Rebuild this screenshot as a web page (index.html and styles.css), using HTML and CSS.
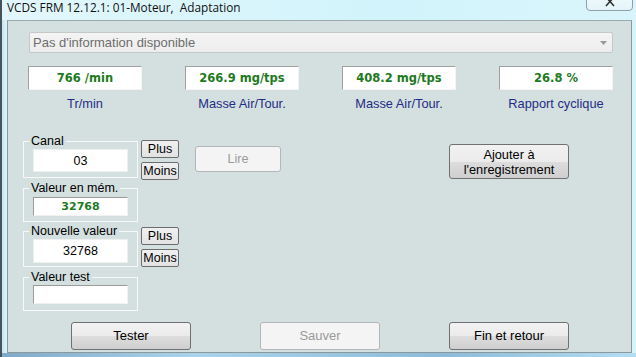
FILE: index.html
```html
<!DOCTYPE html>
<html lang="fr">
<head>
<meta charset="utf-8">
<title>VCDS Adaptation</title>
<link rel="stylesheet" href="styles.css">
</head>
<body>
<div class="window">
  <div class="titlebar">
    <span class="title">VCDS FRM 12.12.1: 01-Moteur,&nbsp; Adaptation</span>
    <div class="close"><svg width="12" height="8" viewBox="0 0 12 8"><path d="M2 -3 L6 1.5 L10 -3 M2 6 L6 1.5 L10 6" fill="none" stroke="#333" stroke-width="1.6"/></svg></div>
  </div>
  <div class="client">
    <div class="combo">
      <span>Pas d'information disponible</span>
      <svg class="arrow" width="7" height="4" viewBox="0 0 7 4"><path d="M0 0 H7 L3.5 4 Z" fill="#9a9a9a"/></svg>
    </div>

    <div class="values">
      <div class="vbox">766 /min</div>
      <div class="vbox">266.9 mg/tps</div>
      <div class="vbox">408.2 mg/tps</div>
      <div class="vbox">26.8 %</div>
      <div class="vlabel">Tr/min</div>
      <div class="vlabel">Masse Air/Tour.</div>
      <div class="vlabel">Masse Air/Tour.</div>
      <div class="vlabel">Rapport cyclique</div>
    </div>

    <div class="lower">
      <div class="leftcol">
        <fieldset class="group g1">
          <legend>Canal</legend>
          <div class="field plain h23">03</div>
        </fieldset>
        <div class="pair p1">
          <button class="btn small">Plus</button>
          <button class="btn small">Moins</button>
        </div>
        <fieldset class="group g2">
          <legend>Valeur en mém.</legend>
          <div class="field sunken h19 green">32768</div>
        </fieldset>
        <fieldset class="group g3">
          <legend>Nouvelle valeur</legend>
          <div class="field plain h24">32768</div>
        </fieldset>
        <div class="pair p2">
          <button class="btn small">Plus</button>
          <button class="btn small">Moins</button>
        </div>
        <fieldset class="group g4">
          <legend>Valeur test</legend>
          <div class="field sunken h19"></div>
        </fieldset>
      </div>
      <button class="btn disabled lire">Lire</button>
      <button class="btn ajouter">Ajouter à<br>l'enregistrement</button>
    </div>

    <div class="bottom">
      <button class="btn big">Tester</button>
      <button class="btn big disabled">Sauver</button>
      <button class="btn big">Fin et retour</button>
    </div>
  </div>
  <div class="bottomframe"></div>
</div>
</body>
</html>
```
FILE: styles.css
```css
* { box-sizing: border-box; }
html, body { margin: 0; padding: 0; }
body {
  width: 636px;
  height: 357px;
  overflow: hidden;
  font-family: "Liberation Sans", Arial, sans-serif;
  background: #d9f3fa;
}
.window {
  width: 636px;
  height: 357px;
  border-left: 2px solid #46525c;
  background: linear-gradient(to right, #c9e6f0 0, #e1f6fb 6px, #d8f4fb 100%);
  display: flex;
  flex-direction: column;
}
.titlebar {
  position: relative;
  height: 20px;
  padding-left: 5px;
  background: linear-gradient(to right, #e2f7fb, #d2f3fb 60%, #d9f5fb);
}
.title {
  font-family: "Open Sans", "Noto Sans", sans-serif;
  font-size: 11.8px;
  line-height: 14px;
  color: #111;
  display: block;
  padding-top: 0;
}
.close {
  position: absolute;
  left: 584px;
  top: -3px;
  width: 47px;
  height: 14px;
  border: 1px solid #8da0a6;
  border-radius: 0 0 4px 4px;
  background: linear-gradient(#eef9fc, #e3f4f8);
  display: flex;
  justify-content: center;
  align-items: flex-start;
  padding-top: 2px;
}
.client {
  margin-left: 5px;
  width: 625px;
  height: 333px;
  background: #d4dfdf;
  border: 1px solid #8a9a9c;
  border-top-color: #9aacae;
  display: flex;
  flex-direction: column;
  padding-top: 11px;
}
.combo {
  margin-left: 21px;
  width: 584px;
  height: 21px;
  border: 1px solid #c3c9c9;
  border-radius: 2px;
  background: linear-gradient(#f4f4f4, #ededed);
  display: flex;
  align-items: center;
  justify-content: space-between;
  padding: 0 5px 0 3px;
  font-size: 13px;
  color: #6d6d6d;
}
.combo .arrow { margin-top: 1px; }
.values {
  margin-top: 13px;
  margin-left: 20px;
  display: grid;
  grid-template-columns: repeat(4, 114px);
  column-gap: 43px;
}
.vbox {
  height: 24px;
  background: #fff;
  border-top: 1px solid #a0a0a0;
  border-left: 1px solid #a0a0a0;
  border-right: 1px solid #f4f4f4;
  border-bottom: 1px solid #f4f4f4;
  font-family: "DejaVu Sans", Verdana, sans-serif;
  font-weight: bold;
  font-size: 11.5px;
  color: #1d7a1d;
  display: flex;
  align-items: center;
  justify-content: center;
}
.vlabel {
  margin-top: 7px;
  text-align: center;
  font-size: 12.8px;
  line-height: 14px;
  color: #1f2d85;
}
.lower {
  margin-top: 23px;
  margin-left: 15px;
  display: flex;
  align-items: flex-start;
}
.leftcol {
  display: grid;
  grid-template-columns: 115px 38px;
  column-gap: 3px;
  align-items: start;
}
.group {
  grid-column: 1;
  width: 115px;
  min-width: 0;
  margin: 0;
  border: 1px solid #f6f9f9;
  padding: 1px 0 5px 9px;
}
.group legend {
  font-size: 12.5px;
  line-height: 14px;
  padding: 0 2px;
  margin-left: -4px;
  color: #000;
}
.g1 { grid-row: 1; padding-bottom: 5px; }
.g2 { grid-row: 2; margin-top: 3px; padding-top: 2px; padding-bottom: 5px; }
.g3 { grid-row: 3; margin-top: 2px; padding-top: 1px; padding-bottom: 3px; }
.g4 { grid-row: 4; margin-top: 3px; padding-top: 1px; padding-bottom: 6px; }
.pair {
  grid-column: 2;
  display: flex;
  flex-direction: column;
  gap: 4px;
}
.p1 { grid-row: 1 / span 2; margin-top: 6px; }
.p2 { grid-row: 3 / span 2; margin-top: 5px; }
.field {
  width: 95px;
  background: #fff;
  display: flex;
  align-items: center;
  justify-content: center;
  font-size: 12.5px;
  color: #000;
}
.field.plain { border: 1px solid #eef0f0; }
.field.sunken {
  border-top: 1px solid #9c9c9c;
  border-left: 1px solid #9c9c9c;
  border-right: 1px solid #f2f2f2;
  border-bottom: 1px solid #f2f2f2;
}
.field.green {
  font-family: "DejaVu Sans", Verdana, sans-serif;
  font-weight: bold;
  font-size: 11px;
  color: #1d7a1d;
}
.h19 { height: 19px; }
.h23 { height: 23px; }
.h24 { height: 24px; }
.btn {
  font-family: "Liberation Sans", Arial, sans-serif;
  font-size: 12.5px;
  color: #000;
  border: 1px solid #707070;
  border-radius: 3px;
  background: linear-gradient(#f2f2f2 0%, #ebebeb 50%, #dddddd 51%, #cfcfcf 100%);
  padding: 0;
  margin: 0;
  line-height: 14px;
  text-align: center;
}
.btn.small {
  height: 18px;
  width: 38px;
  border-radius: 2px;
  background: linear-gradient(#f0f0f0, #e2e2e2);
  border-color: #6d6d6d;
}
.btn.disabled {
  color: #9a9a9a;
  border-color: #b3b7b9;
  background: #f4f4f4;
}
.lire {
  width: 86px;
  height: 26px;
  margin-left: 16px;
  margin-top: 12px;
}
.ajouter {
  width: 120px;
  height: 35px;
  margin-left: 168px;
  margin-top: 10px;
  font-size: 12.8px;
  line-height: 15px;
}
.bottom {
  margin-top: 11px;
  margin-left: 63px;
  display: flex;
  gap: 69px;
}
.btn.big {
  width: 120px;
  height: 28px;
  font-size: 13px;
}
.bottomframe {
  flex: 1;
  background: linear-gradient(to right, #7fa9c6, #a9d3ea 30%, #8dbbd8 70%, #b4def0);
}
```
